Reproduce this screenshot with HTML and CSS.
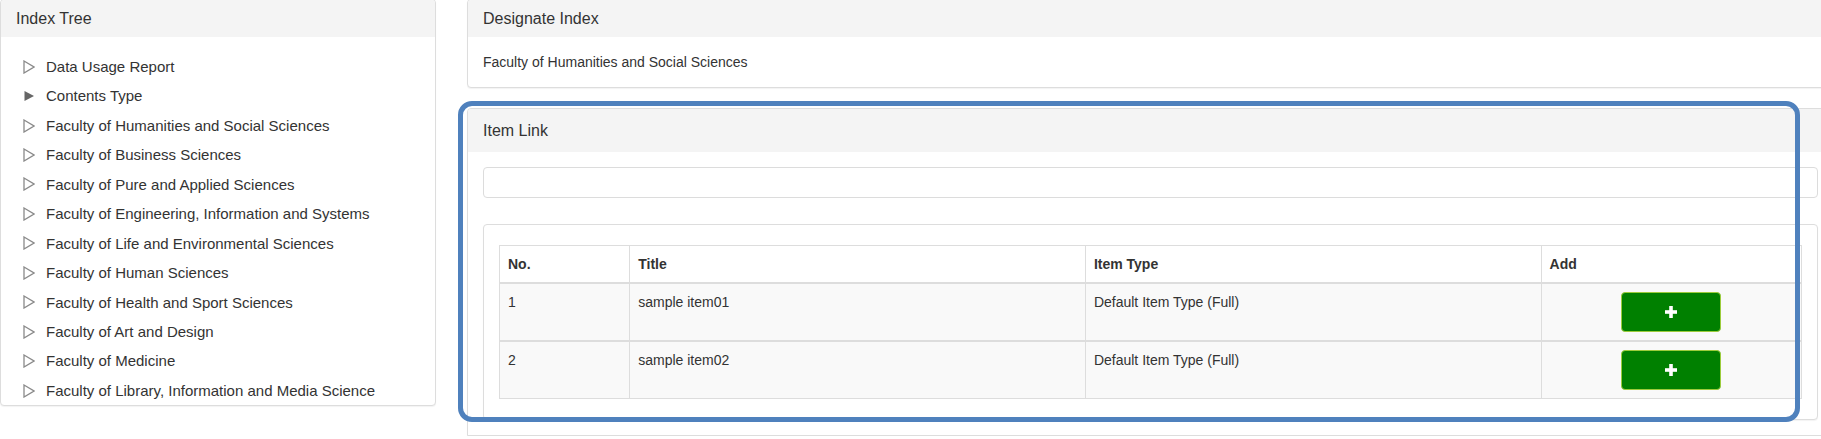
FILE: index.html
```html
<!DOCTYPE html>
<html lang="en">
<head>
<meta charset="utf-8">
<title>Item Link</title>
<link rel="stylesheet" href="styles.css">
</head>
<body>
<div class="page">
  <aside class="col-left">
    <div class="panel">
      <div class="panel-heading">Index Tree</div>
      <ul class="tree">
        <li><svg class="tri" width="12" height="14" viewBox="0 0 12 14"><polygon points="1,1 11,7 1,13" fill="none" stroke="#8a8a8a" stroke-width="1.3"/></svg>Data Usage Report</li>
        <li><svg class="tri" width="12" height="14" viewBox="0 0 12 14"><polygon points="1.5,2 11,7 1.5,12" fill="#666"/></svg>Contents Type</li>
        <li><svg class="tri" width="12" height="14" viewBox="0 0 12 14"><polygon points="1,1 11,7 1,13" fill="none" stroke="#8a8a8a" stroke-width="1.3"/></svg>Faculty of Humanities and Social Sciences</li>
        <li><svg class="tri" width="12" height="14" viewBox="0 0 12 14"><polygon points="1,1 11,7 1,13" fill="none" stroke="#8a8a8a" stroke-width="1.3"/></svg>Faculty of Business Sciences</li>
        <li><svg class="tri" width="12" height="14" viewBox="0 0 12 14"><polygon points="1,1 11,7 1,13" fill="none" stroke="#8a8a8a" stroke-width="1.3"/></svg>Faculty of Pure and Applied Sciences</li>
        <li><svg class="tri" width="12" height="14" viewBox="0 0 12 14"><polygon points="1,1 11,7 1,13" fill="none" stroke="#8a8a8a" stroke-width="1.3"/></svg>Faculty of Engineering, Information and Systems</li>
        <li><svg class="tri" width="12" height="14" viewBox="0 0 12 14"><polygon points="1,1 11,7 1,13" fill="none" stroke="#8a8a8a" stroke-width="1.3"/></svg>Faculty of Life and Environmental Sciences</li>
        <li><svg class="tri" width="12" height="14" viewBox="0 0 12 14"><polygon points="1,1 11,7 1,13" fill="none" stroke="#8a8a8a" stroke-width="1.3"/></svg>Faculty of Human Sciences</li>
        <li><svg class="tri" width="12" height="14" viewBox="0 0 12 14"><polygon points="1,1 11,7 1,13" fill="none" stroke="#8a8a8a" stroke-width="1.3"/></svg>Faculty of Health and Sport Sciences</li>
        <li><svg class="tri" width="12" height="14" viewBox="0 0 12 14"><polygon points="1,1 11,7 1,13" fill="none" stroke="#8a8a8a" stroke-width="1.3"/></svg>Faculty of Art and Design</li>
        <li><svg class="tri" width="12" height="14" viewBox="0 0 12 14"><polygon points="1,1 11,7 1,13" fill="none" stroke="#8a8a8a" stroke-width="1.3"/></svg>Faculty of Medicine</li>
        <li><svg class="tri" width="12" height="14" viewBox="0 0 12 14"><polygon points="1,1 11,7 1,13" fill="none" stroke="#8a8a8a" stroke-width="1.3"/></svg>Faculty of Library, Information and Media Science</li>
      </ul>
    </div>
  </aside>

  <main class="col-right">
    <div class="panel panel-designate">
      <div class="panel-heading">Designate Index</div>
      <div class="panel-body">Faculty of Humanities and Social Sciences</div>
    </div>

    <div class="panel panel-link">
      <div class="panel-heading heading-tall">Item Link</div>
      <div class="panel-body link-body">
        <input class="search" type="text">
        <div class="panel inner-panel">
          <table class="items">
            <colgroup>
              <col class="c-no"><col class="c-title"><col class="c-type"><col class="c-add">
            </colgroup>
            <thead>
              <tr><th>No.</th><th>Title</th><th>Item Type</th><th>Add</th></tr>
            </thead>
            <tbody>
              <tr>
                <td>1</td><td>sample item01</td><td>Default Item Type (Full)</td>
                <td class="add-cell"><button class="btn-add" type="button"><svg width="14" height="14" viewBox="0 0 14 14"><rect x="5.2" y="1" width="3.6" height="12" fill="#fff"/><rect x="1" y="5.2" width="12" height="3.6" fill="#fff"/></svg></button></td>
              </tr>
            </tbody>
            <tbody>
              <tr>
                <td>2</td><td>sample item02</td><td>Default Item Type (Full)</td>
                <td class="add-cell"><button class="btn-add" type="button"><svg width="14" height="14" viewBox="0 0 14 14"><rect x="5.2" y="1" width="3.6" height="12" fill="#fff"/><rect x="1" y="5.2" width="12" height="3.6" fill="#fff"/></svg></button></td>
              </tr>
            </tbody>
          </table>
        </div>
      </div>
    </div>
  </main>

  <div class="highlight"></div>
</div>
</body>
</html>
```

FILE: styles.css
```css
* { box-sizing: border-box; }

html, body {
  margin: 0;
  padding: 0;
  background: #fff;
  overflow: hidden;
}

body {
  font-family: "Liberation Sans", Arial, sans-serif;
  font-size: 14px;
  line-height: 20px;
  color: #333;
}

.page {
  position: relative;
  display: flex;
  align-items: flex-start;
  gap: 31px;
  width: 1834px;
  margin-top: -1px;
}

.col-left {
  width: 436px;
  flex: 0 0 436px;
}

.col-right {
  width: 1367px;
  flex: 0 0 1367px;
  display: flex;
  flex-direction: column;
  gap: 20px;
}

.panel {
  background: #fff;
  border: 1px solid #ddd;
  border-radius: 4px;
  box-shadow: 0 1px 1px rgba(0, 0, 0, 0.05);
}

.panel-heading {
  background: #f4f4f4;
  padding: 10px 15px;
  font-size: 16px;
  line-height: 17px;
  color: #333;
  border-radius: 3px 3px 0 0;
}

.heading-tall {
  padding: 13px 15px;
}

.panel-body {
  padding: 15px;
}

.tree {
  list-style: none;
  margin: 0;
  padding: 15px 15px 0 22px;
}

.tree li {
  display: flex;
  align-items: center;
  gap: 11px;
  padding: 4px 0;
  font-size: 15px;
  line-height: 21.43px;
  color: #333;
  white-space: nowrap;
}

.tri {
  flex: 0 0 12px;
  display: block;
}

.panel-link {
  border-bottom-left-radius: 0;
  border-bottom-right-radius: 0;
}

.link-body {
  display: flex;
  flex-direction: column;
  gap: 26px;
}

.search {
  display: block;
  width: 100%;
  height: 31px;
  border: 1px solid #dcdcdc;
  border-radius: 4px;
  background: #fff;
  font: inherit;
  padding: 4px 10px;
  outline: none;
}

.inner-panel {
  padding: 20px 15px 20px;
}

.items {
  width: 100%;
  border-collapse: collapse;
  border-spacing: 0;
  table-layout: fixed;
  border: 1px solid #ddd;
  font-size: 14px;
  line-height: 20px;
}

.c-no { width: 10%; }
.c-title { width: 35%; }
.c-type { width: 35%; }
.c-add { width: 20%; }

.items th,
.items td {
  border: 1px solid #ddd;
  padding: 8px;
  text-align: left;
  vertical-align: top;
}

.items th {
  font-weight: bold;
  font-size: 14px;
  background: #fff;
  border-bottom: 2px solid #ddd;
  vertical-align: bottom;
}

.items tbody tr {
  background: #f9f9f9;
}

.items tbody + tbody {
  border-top: 2px solid #ddd;
}

.add-cell {
  text-align: center !important;
}

.btn-add {
  display: inline-flex;
  align-items: center;
  justify-content: center;
  width: 100px;
  height: 40px;
  padding: 0;
  background: #008000;
  border: 1px solid #9ccc3c;
  border-radius: 4px;
  cursor: pointer;
  vertical-align: top;
}

.btn-add svg {
  display: block;
}

.highlight {
  position: absolute;
  left: 458px;
  top: 102px;
  width: 1342px;
  height: 321px;
  border: 5px solid #4f81bd;
  border-radius: 14px;
  pointer-events: none;
}
```
